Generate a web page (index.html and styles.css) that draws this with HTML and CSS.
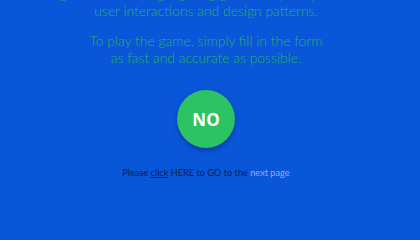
FILE: index.html
```html
<!DOCTYPE html>
<html>
<head>
<meta charset="utf-8">
<link rel="stylesheet" href="styles.css">
</head>
<body>
<main class="page">
  <p class="intro">The game is about highlighting good and poor practices in<br>user interactions and design patterns.</p>
  <p class="intro">To play the game, simply fill in the form<br>as fast and accurate as possible.</p>
  <button class="no-btn">NO</button>
  <p class="footer">Please <a class="click" href="#">click</a> HERE to GO to the <span class="next">next page</span></p>
</main>
</body>
</html>
```
FILE: styles.css
```css
html, body {
  margin: 0;
  padding: 0;
  background: #0a56d8;
  height: 100%;
  overflow: hidden;
}
.page {
  display: flex;
  flex-direction: column;
  align-items: center;
  margin-top: -15px;
  padding-right: 8px;
  font-family: "Lato", "Open Sans", sans-serif;
}
.intro {
  margin: 0 0 13px;
  font-size: 13.9px;
  font-weight: 300;
  line-height: 17px;
  color: #26b265;
  text-align: center;
}
.no-btn {
  margin-top: 11px;
  width: 58px;
  height: 58px;
  border-radius: 50%;
  border: none;
  background: #2bc363;
  color: #fff;
  font-family: "Open Sans", sans-serif;
  font-weight: 700;
  font-size: 17px;
  box-shadow: 0 2px 4px rgba(0, 20, 80, 0.45);
  padding: 0;
}
.footer {
  margin: 19px 0 0;
  font-size: 9.2px;
  color: #0d1e4a;
}
.click {
  color: #0d1e4a;
  text-decoration: underline;
}
.next {
  color: #8eaaf0;
}
```
